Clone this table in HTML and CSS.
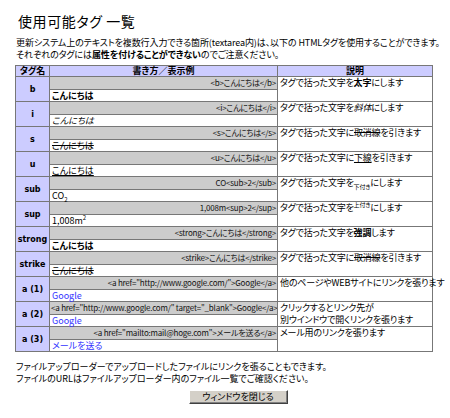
FILE: index.html
```html
<!DOCTYPE html>
<html lang="ja">
<head>
<meta charset="utf-8">
<link rel="stylesheet" href="styles.css">
</head>
<body>
<div class="page">
  <h1 class="title">使用可能タグ 一覧</h1>
  <p class="intro">更新システム上のテキストを複数行入力できる箇所(textarea内)は、以下の HTMLタグを使用することができます。<br>それぞれのタグには<b>属性を付けることができない</b>のでご注意ください。</p>
  <table class="tags">
    <colgroup><col class="c1"><col class="c2"><col class="c3"></colgroup>
    <tr class="head"><th class="th-name">タグ名</th><th>書き方／表示例</th><th>説明</th></tr>

    <tr><td class="name" rowspan="2">b</td><td class="code">&lt;b&gt;こんにちは&lt;/b&gt;</td><td class="desc" rowspan="2">タグで括った文字を<b>太字</b>にします</td></tr>
    <tr><td class="ex"><b>こんにちは</b></td></tr>

    <tr><td class="name" rowspan="2">i</td><td class="code">&lt;i&gt;こんにちは&lt;/i&gt;</td><td class="desc" rowspan="2">タグで括った文字を<i>斜体</i>にします</td></tr>
    <tr><td class="ex"><i>こんにちは</i></td></tr>

    <tr><td class="name" rowspan="2">s</td><td class="code">&lt;s&gt;こんにちは&lt;/s&gt;</td><td class="desc" rowspan="2">タグで括った文字に<s>取消線</s>を引きます</td></tr>
    <tr><td class="ex"><s>こんにちは</s></td></tr>

    <tr><td class="name" rowspan="2">u</td><td class="code">&lt;u&gt;こんにちは&lt;/u&gt;</td><td class="desc" rowspan="2">タグで括った文字に<u>下線</u>を引きます</td></tr>
    <tr><td class="ex"><u>こんにちは</u></td></tr>

    <tr><td class="name" rowspan="2">sub</td><td class="code">CO&lt;sub&gt;2&lt;/sub&gt;</td><td class="desc" rowspan="2">タグで括った文字を<sub>下付き</sub>にします</td></tr>
    <tr><td class="ex">CO<sub>2</sub></td></tr>

    <tr><td class="name" rowspan="2">sup</td><td class="code">1,008m&lt;sup&gt;2&lt;/sup&gt;</td><td class="desc" rowspan="2">タグで括った文字を<sup>上付き</sup>にします</td></tr>
    <tr><td class="ex">1,008m<sup>2</sup></td></tr>

    <tr><td class="name" rowspan="2">strong</td><td class="code">&lt;strong&gt;こんにちは&lt;/strong&gt;</td><td class="desc" rowspan="2">タグで括った文字を<strong>強調</strong>します</td></tr>
    <tr><td class="ex"><strong>こんにちは</strong></td></tr>

    <tr><td class="name" rowspan="2">strike</td><td class="code">&lt;strike&gt;こんにちは&lt;/strike&gt;</td><td class="desc" rowspan="2">タグで括った文字に<s>取消線</s>を引きます</td></tr>
    <tr><td class="ex"><s>こんにちは</s></td></tr>

    <tr><td class="name" rowspan="2">a (1)</td><td class="code">&lt;a href="http://www.google.com/"&gt;Google&lt;/a&gt;</td><td class="desc" rowspan="2">他のページやWEBサイトにリンクを張ります</td></tr>
    <tr><td class="ex"><a class="lnk" href="#">Google</a></td></tr>

    <tr><td class="name" rowspan="2">a (2)</td><td class="code">&lt;a href="http://www.google.com/" target="_blank"&gt;Google&lt;/a&gt;</td><td class="desc" rowspan="2">クリックするとリンク先が<br>別ウインドウで開くリンクを張ります</td></tr>
    <tr><td class="ex"><a class="lnk" href="#">Google</a></td></tr>

    <tr><td class="name" rowspan="2">a (3)</td><td class="code">&lt;a href="mailto:mail@hoge.com"&gt;メールを送る&lt;/a&gt;</td><td class="desc" rowspan="2">メール用のリンクを張ります</td></tr>
    <tr><td class="ex"><a class="lnk" href="#">メールを送る</a></td></tr>
  </table>
  <p class="note">ファイルアップローダーでアップロードしたファイルにリンクを張ることもできます。<br>ファイルのURLはファイルアップローダー内のファイル一覧でご確認ください。</p>
  <div class="actions"><button class="close" type="button">ウィンドウを閉じる</button></div>
</div>
</body>
</html>
```

FILE: styles.css
```css
html, body {
  margin: 0;
  padding: 0;
  background: #ffffff;
}
body {
  font-family: "Noto Sans CJK JP", "Noto Sans", sans-serif;
  font-size: 9px;
  line-height: 12px;
  color: #000;
  font-feature-settings: "palt";
}
.page {
  padding: 12px 0 0 15px;
  width: 430px;
}
.title {
  margin: 0 0 0 3px;
  font-size: 14px;
  line-height: 18px;
  font-weight: normal;
  letter-spacing: 0.6px;
}
.intro {
  margin: 7px 0 0 1px;
  line-height: 12px;
  white-space: nowrap;
  letter-spacing: -0.1px;
}
.tags {
  margin-top: 4px;
  width: 418px;
  border-collapse: collapse;
  border: 1px solid #555;
  table-layout: fixed;
}
.c1 { width: 34px; }
.c2 { width: 228px; }
.c3 { width: 155px; }
.tags th, .tags td {
  border: 1px solid #777;
  padding: 0 2px;
  line-height: 11px;
  font-size: 9px;
}
.tags th {
  background: #ccccff;
  font-weight: bold;
  text-align: center;
  line-height: 10px;
}
.tags th.th-name {
  padding: 0 1px;
}
.tags td.name {
  background: #ccccff;
  font-weight: bold;
  text-align: center;
  vertical-align: middle;
  white-space: nowrap;
  font-family: "DejaVu Sans", "Noto Sans CJK JP", sans-serif;
  font-size: 8px;
  padding: 0;
}
.tags td.code {
  background: #cccccc;
  text-align: right;
  line-height: 12px;
  white-space: nowrap;
  overflow: hidden;
  color: #111;
  font-size: 8px;
  padding: 0 1px;
  letter-spacing: -0.2px;
}
.tags td.ex {
  background: #fff;
  line-height: 11px;
  white-space: nowrap;
}
.tags td.desc {
  vertical-align: top;
  background: #fff;
  line-height: 11.5px;
  white-space: nowrap;
  letter-spacing: -0.2px;
}
sub, sup {
  font-size: 6px;
  line-height: 0;
}
.lnk {
  color: #3333ff;
  text-decoration: none;
}
.note {
  margin: 9px 0 0 1px;
}
.actions {
  display: flex;
  justify-content: center;
  padding: 5px 0 0 16px;
}
.close {
  width: 99px;
  height: 14px;
  padding: 0;
  background: #d4d0c8;
  border: 1px solid;
  border-color: #ffffff #404040 #404040 #ffffff;
  box-shadow: inset -1px -1px 0 #808080;
  font-family: "Noto Sans CJK JP", sans-serif;
  font-size: 9px;
  line-height: 12px;
  color: #000;
  font-feature-settings: "palt";
}
```
